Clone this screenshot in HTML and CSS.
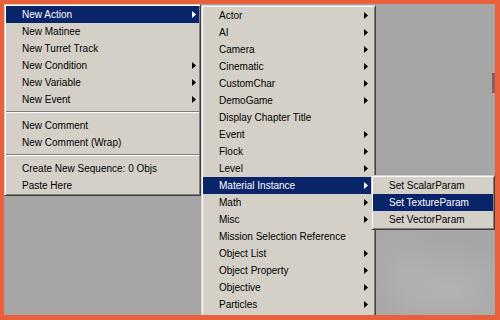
FILE: index.html
```html
<!DOCTYPE html>
<html lang="en">
<head>
    <meta charset="UTF-8">
    <title>Kismet - context menu</title>
    <link rel="stylesheet" href="styles.css">
</head>
<body>
    <div class="screen">
        <div class="canvas">
            <div class="node-edge"></div>
        </div>

        <!-- Root context menu -->
        <ul class="menu menu-main">
            <li class="item sub active">New Action</li>
            <li class="item">New Matinee</li>
            <li class="item">New Turret Track</li>
            <li class="item sub">New Condition</li>
            <li class="item sub">New Variable</li>
            <li class="item sub">New Event</li>
            <li class="sep"></li>
            <li class="item">New Comment</li>
            <li class="item">New Comment (Wrap)</li>
            <li class="sep"></li>
            <li class="item">Create New Sequence: 0 Objs</li>
            <li class="item">Paste Here</li>
        </ul>

        <!-- New Action submenu -->
        <ul class="menu menu-actions">
            <li class="item sub">Actor</li>
            <li class="item sub">AI</li>
            <li class="item sub">Camera</li>
            <li class="item sub">Cinematic</li>
            <li class="item sub">CustomChar</li>
            <li class="item sub">DemoGame</li>
            <li class="item">Display Chapter Title</li>
            <li class="item sub">Event</li>
            <li class="item sub">Flock</li>
            <li class="item sub">Level</li>
            <li class="item sub active">Material Instance</li>
            <li class="item sub">Math</li>
            <li class="item sub">Misc</li>
            <li class="item">Mission Selection Reference</li>
            <li class="item sub">Object List</li>
            <li class="item sub">Object Property</li>
            <li class="item sub">Objective</li>
            <li class="item sub">Particles</li>
            <li class="item sub">Physics</li>
        </ul>

        <!-- Material Instance submenu -->
        <ul class="menu menu-material">
            <li class="item">Set ScalarParam</li>
            <li class="item active">Set TextureParam</li>
            <li class="item">Set VectorParam</li>
        </ul>

        <div class="frame"></div>
    </div>
</body>
</html>
```

FILE: styles.css
```css
* {
    margin: 0;
    padding: 0;
    box-sizing: border-box;
}

body {
    background-color: #e9603c;
    font-family: "Liberation Sans", Arial, sans-serif;
    font-size: 10px;
    color: #000;
}

.screen {
    position: relative;
    width: 500px;
    height: 320px;
    overflow: hidden;
}

/* Kismet canvas behind the menus */
.canvas {
    width: 100%;
    height: 100%;
    background-color: #a6a6a6;
    background-image:
        radial-gradient(ellipse 70px 50px at 450px 290px, rgba(255, 255, 255, 0.14), transparent),
        radial-gradient(ellipse 50px 60px at 400px 270px, rgba(255, 255, 255, 0.08), transparent);
}

.node-edge {
    position: absolute;
    left: 492px;
    top: 73px;
    width: 8px;
    height: 20px;
    background-color: #6e6e6e;
    border: 1px solid #b8484a;
}

/* Orange frame lies over everything */
.frame {
    position: absolute;
    inset: 0;
    border-style: solid;
    border-color: #e9603c;
    border-width: 4px 5px 5px 4px;
    pointer-events: none;
}

/* Classic menus */
.menu {
    position: absolute;
    list-style: none;
    background-color: #d4d0c8;
    border: 1px solid;
    border-color: #d4d0c8 #404040 #404040 #d4d0c8;
    box-shadow: inset 1px 1px #fff, inset -1px -1px #808080;
    padding: 1px;
}

.menu-main {
    left: 4px;
    top: 4px;
    width: 197px;
}

.menu-actions {
    left: 201px;
    top: 5px;
    width: 175px;
}

.menu-material {
    left: 371px;
    top: 175px;
    width: 124px;
}

.item {
    position: relative;
    height: 17px;
    line-height: 17px;
    padding-left: 16px;
    white-space: nowrap;
}

.item.active {
    background-color: #0a246a;
    color: #fff;
}

.sub::after {
    content: "";
    position: absolute;
    right: 6px;
    top: 5px;
    width: 4px;
    height: 7px;
    background-color: #000;
    clip-path: polygon(0 0, 100% 50%, 0 100%);
}

.menu-main .sub::after {
    right: 3px;
}

.item.active.sub::after {
    background-color: #fff;
}

.sep {
    height: 9px;
    padding-top: 3px;
}

.sep::before {
    content: "";
    display: block;
    border-top: 1px solid #808080;
    border-bottom: 1px solid #fff;
}
```
